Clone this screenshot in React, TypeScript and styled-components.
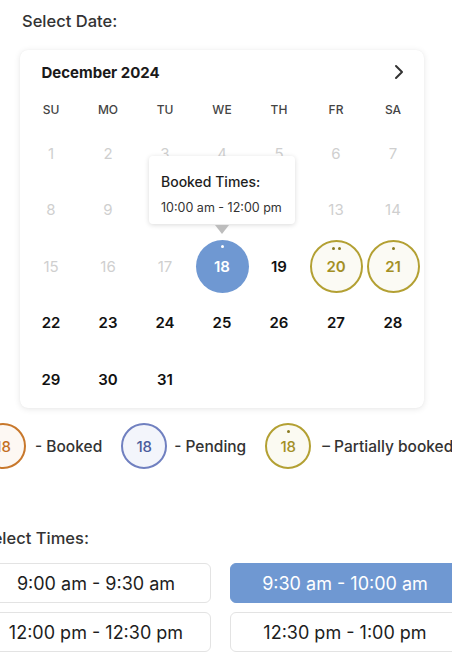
import React from "react";
import styled, { createGlobalStyle, css } from "styled-components";

const Global = createGlobalStyle`
  html, body { margin: 0; padding: 0; background: #fff; }
  body { font-family: Inter, "Noto Sans", Arial, sans-serif; color: #222; overflow: hidden; width: 452px; height: 659px; }
`;

const Page = styled.div`
  width: 452px;
  height: 659px;
  overflow: hidden;
  display: flex;
  flex-direction: column;
`;

const Top = styled.section`
  padding: 0 0 0 20px;
  display: flex;
  flex-direction: column;
`;

const Label = styled.div`
  font-size: 16.5px;
  font-weight: 500;
  color: #333;
  line-height: 20px;
`;

const DateLabel = styled(Label)`
  margin: 11px 0 0 2px;
`;

const Card = styled.div`
  margin-top: 19px;
  width: 404px;
  height: 358px;
  box-sizing: border-box;
  background: #fff;
  border-radius: 8px;
  box-shadow: 0 1px 6px rgba(0, 0, 0, 0.1), 0 0 1px rgba(0, 0, 0, 0.06);
  padding: 0 2.5px;
  display: flex;
  flex-direction: column;
`;

const Header = styled.div`
  height: 44px;
  display: flex;
  align-items: center;
  justify-content: space-between;
  padding: 0 16px 0 19px;
`;

const Month = styled.div`
  font-size: 15px;
  font-weight: 700;
  color: #1a1a1a;
`;

const Grid = styled.div`
  display: grid;
  grid-template-columns: repeat(7, 57px);
`;

const WeekRow = styled(Grid)`
  height: 31px;
  align-items: center;
`;

const WeekDay = styled.div`
  text-align: center;
  font-size: 12px;
  font-weight: 500;
  color: #444;
`;

const DayRow = styled(Grid)`
  height: 56.5px;
  align-items: center;
`;

type Kind = "muted" | "normal" | "booked" | "partial";

const Cell = styled.div`
  position: relative;
  display: flex;
  justify-content: center;
  align-items: center;
  height: 100%;
`;

const Day = styled.div<{ $kind: Kind }>`
  position: relative;
  width: 53px;
  height: 53px;
  box-sizing: border-box;
  border-radius: 50%;
  display: flex;
  align-items: center;
  justify-content: center;
  font-size: 15px;
  ${(p) =>
    p.$kind === "muted" &&
    css`
      color: #cfcfcf;
      font-weight: 400;
    `}
  ${(p) =>
    p.$kind === "normal" &&
    css`
      color: #111;
      font-weight: 600;
    `}
  ${(p) =>
    p.$kind === "booked" &&
    css`
      background: #6f98d2;
      color: #fff;
      font-weight: 600;
    `}
  ${(p) =>
    p.$kind === "partial" &&
    css`
      background: #fbfaf4;
      border: 2px solid #b3a033;
      color: #a38f25;
      font-weight: 600;
    `}
`;

const Dots = styled.div`
  position: absolute;
  top: 5px;
  left: 0;
  right: 0;
  display: flex;
  justify-content: center;
  gap: 3px;
`;

const Dot = styled.span<{ $light?: boolean }>`
  width: 3px;
  height: 3px;
  border-radius: 50%;
  background: ${(p) => (p.$light ? "#fff" : "#8a7a20")};
`;

const Tooltip = styled.div`
  position: absolute;
  bottom: 71px;
  left: 50%;
  transform: translateX(-50%);
  width: 146px;
  height: 68px;
  box-sizing: border-box;
  background: #fff;
  border-radius: 4px;
  box-shadow: 0 1px 5px rgba(0, 0, 0, 0.15);
  padding: 17px 0 0 12px;
  text-align: left;
  z-index: 2;
  &::after {
    content: "";
    position: absolute;
    left: 50%;
    bottom: -10px;
    transform: translateX(-50%);
    border-left: 7px solid transparent;
    border-right: 7px solid transparent;
    border-top: 9px solid #bdbdbd;
  }
`;

const TipTitle = styled.div`
  font-size: 14px;
  font-weight: 500;
  color: #1e1e1e;
  line-height: 18px;
`;

const TipText = styled.div`
  margin-top: 9px;
  font-size: 12.5px;
  color: #333;
  line-height: 16px;
`;

const Bottom = styled.section`
  margin-left: -20px;
  width: 480px;
  display: flex;
  flex-direction: column;
`;

const Legend = styled.div`
  margin-top: 15px;
  display: flex;
  align-items: center;
  gap: 19px;
  white-space: nowrap;
`;

const LegendItem = styled.div<{ $gap?: number }>`
  display: flex;
  align-items: center;
  gap: ${(p) => p.$gap ?? 8}px;
  font-size: 15.5px;
  font-weight: 500;
  color: #333;
`;

const colors = {
  booked: { border: "#c8782c", bg: "#fdf8f3", text: "#c46f1f" },
  pending: { border: "#7080c0", bg: "#f3f5fb", text: "#4b5c9c" },
  partial: { border: "#b3a033", bg: "#fbfaf2", text: "#a38f25" },
};

const LegendCircle = styled.div<{ $c: keyof typeof colors }>`
  position: relative;
  width: 46px;
  height: 46px;
  box-sizing: border-box;
  border-radius: 50%;
  border: 2px solid ${(p) => colors[p.$c].border};
  background: ${(p) => colors[p.$c].bg};
  color: ${(p) => colors[p.$c].text};
  display: flex;
  align-items: center;
  justify-content: center;
  font-size: 15px;
  font-weight: 500;
`;

const TimesLabel = styled(Label)`
  margin: 59px 0 0 2px;
`;

const Times = styled.div`
  margin-top: 15px;
  display: grid;
  grid-template-columns: 230px 230px;
  column-gap: 19px;
  row-gap: 9px;
  padding-left: 1px;
`;

const TimeButton = styled.button<{ $selected?: boolean }>`
  height: 40px;
  border-radius: 6px;
  font-family: inherit;
  font-size: 18px;
  font-weight: 400;
  cursor: pointer;
  border: 1px solid ${(p) => (p.$selected ? "#6f98d2" : "#e3e3e3")};
  background: ${(p) => (p.$selected ? "#6f98d2" : "#fff")};
  color: ${(p) => (p.$selected ? "#fff" : "#1d1d1d")};
`;

const weeks: { d: number | null; k: Kind; dots?: number; tip?: boolean }[][] = [
  [1, 2, 3, 4, 5, 6, 7].map((d) => ({ d, k: "muted" as Kind })),
  [8, 9, 10, 11, 12, 13, 14].map((d) => ({ d, k: "muted" as Kind })),
  [
    { d: 15, k: "muted" },
    { d: 16, k: "muted" },
    { d: 17, k: "muted" },
    { d: 18, k: "booked", dots: 1, tip: true },
    { d: 19, k: "normal" },
    { d: 20, k: "partial", dots: 2 },
    { d: 21, k: "partial", dots: 1 },
  ],
  [22, 23, 24, 25, 26, 27, 28].map((d) => ({ d, k: "normal" as Kind })),
  [
    { d: 29, k: "normal" },
    { d: 30, k: "normal" },
    { d: 31, k: "normal" },
    { d: null, k: "normal" },
    { d: null, k: "normal" },
    { d: null, k: "normal" },
    { d: null, k: "normal" },
  ],
];

export default function App() {
  return (
    <Page>
      <Global />
      <Top>
        <DateLabel>Select Date:</DateLabel>
        <Card>
          <Header>
            <Month>December 2024</Month>
            <svg width="14" height="16" viewBox="0 0 14 16">
              <polyline points="4,2 10,8 4,14" fill="none" stroke="#333" strokeWidth="2" strokeLinecap="round" strokeLinejoin="round" />
            </svg>
          </Header>
          <WeekRow>
            {["SU", "MO", "TU", "WE", "TH", "FR", "SA"].map((w) => (
              <WeekDay key={w}>{w}</WeekDay>
            ))}
          </WeekRow>
          {weeks.map((row, i) => (
            <DayRow key={i}>
              {row.map((c, j) => (
                <Cell key={j}>
                  {c.tip && (
                    <Tooltip>
                      <TipTitle>Booked Times:</TipTitle>
                      <TipText>10:00 am - 12:00 pm</TipText>
                    </Tooltip>
                  )}
                  {c.d !== null && (
                    <Day $kind={c.k}>
                      {c.dots ? (
                        <Dots>
                          {Array.from({ length: c.dots }).map((_, n) => (
                            <Dot key={n} $light={c.k === "booked"} />
                          ))}
                        </Dots>
                      ) : null}
                      {c.d}
                    </Day>
                  )}
                </Cell>
              ))}
            </DayRow>
          ))}
        </Card>
      </Top>
      <Bottom>
        <Legend>
          <LegendItem $gap={9}>
            <LegendCircle $c="booked">18</LegendCircle>- Booked
          </LegendItem>
          <LegendItem $gap={7}>
            <LegendCircle $c="pending">18</LegendCircle>- Pending
          </LegendItem>
          <LegendItem $gap={11}>
            <LegendCircle $c="partial">
              <Dots>
                <Dot />
              </Dots>
              18
            </LegendCircle>
            – Partially booked
          </LegendItem>
        </Legend>
        <TimesLabel>Select Times:</TimesLabel>
        <Times>
          <TimeButton>9:00 am - 9:30 am</TimeButton>
          <TimeButton $selected>9:30 am - 10:00 am</TimeButton>
          <TimeButton>12:00 pm - 12:30 pm</TimeButton>
          <TimeButton>12:30 pm - 1:00 pm</TimeButton>
        </Times>
      </Bottom>
    </Page>
  );
}
